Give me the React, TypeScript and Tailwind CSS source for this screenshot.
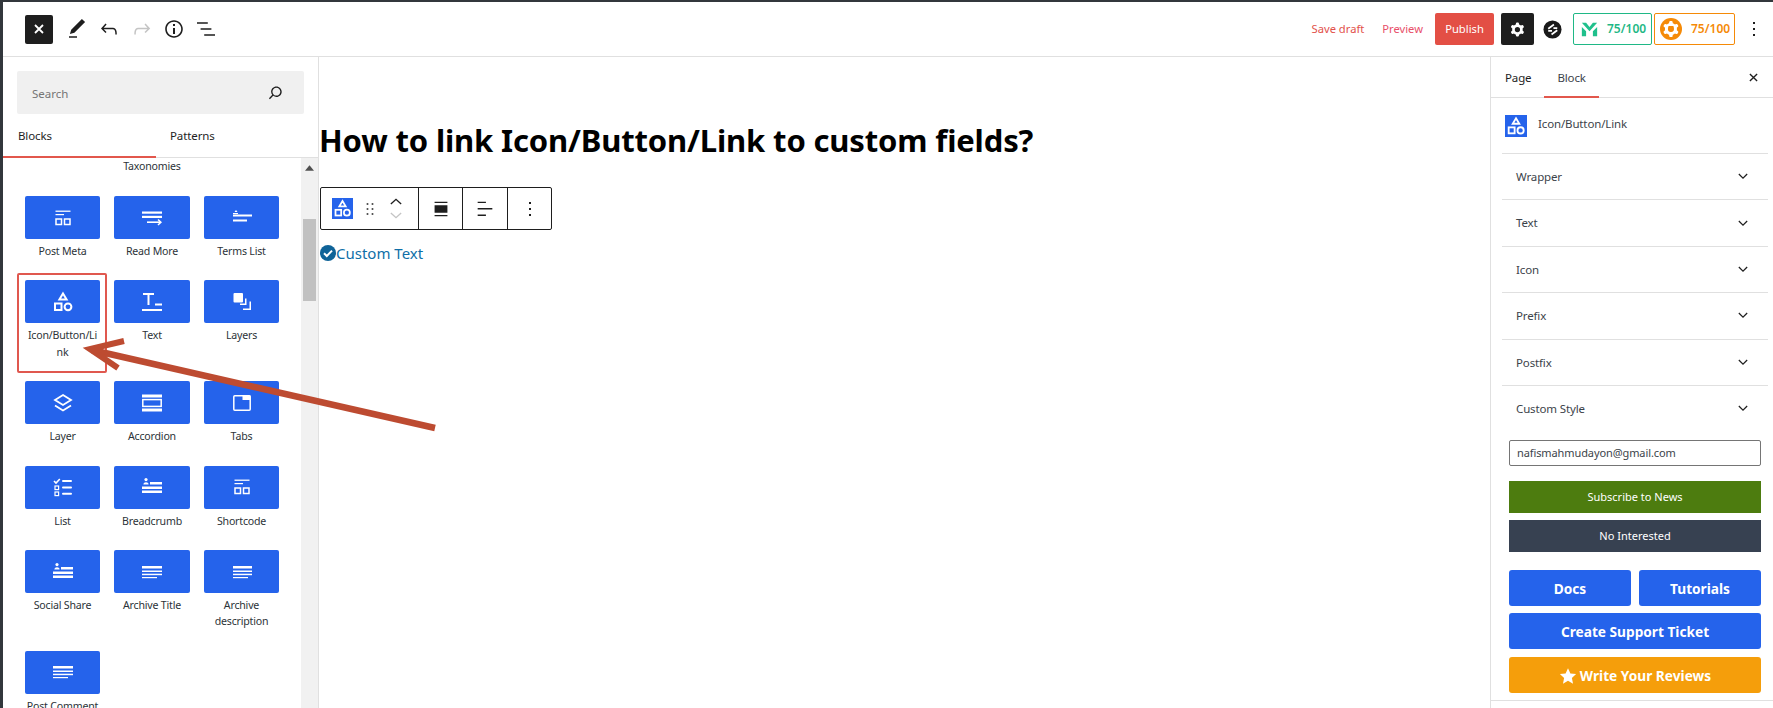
import React from "react";

const P = ({ d, className = "w-6 h-6", rule }: { d: string; className?: string; rule?: boolean }) => (
  <svg viewBox="0 0 24 24" className={className} fill="currentColor">
    <path d={d} fillRule={rule ? "evenodd" : undefined} clipRule={rule ? "evenodd" : undefined} />
  </svg>
);

const COG = "M10.289 4.836A1 1 0 0111.275 4h1.306a1 1 0 01.987.836l.244 1.466c.787.26 1.503.679 2.108 1.218l1.393-.522a1 1 0 011.216.437l.653 1.13a1 1 0 01-.23 1.273l-1.148.944a6.025 6.025 0 010 2.435l1.149.946a1 1 0 01.23 1.272l-.653 1.13a1 1 0 01-1.216.437l-1.394-.522c-.605.54-1.32.958-2.108 1.218l-.244 1.466a1 1 0 01-.987.836h-1.306a1 1 0 01-.986-.836l-.244-1.466a5.995 5.995 0 01-2.108-1.218l-1.394.522a1 1 0 01-1.217-.436l-.653-1.131a1 1 0 01.23-1.272l1.149-.946a6.026 6.026 0 010-2.435l-1.148-.944a1 1 0 01-.23-1.272l.653-1.131a1 1 0 011.217-.437l1.393.522a5.994 5.994 0 012.108-1.218l.244-1.466zM14.929 12a3 3 0 11-6 0 3 3 0 016 0z";
const DOTS = "M13 19h-2v-2h2v2zm0-6h-2v-2h2v2zm0-6h-2V5h2v2z";

const Shapes = ({ className = "w-6 h-6" }: { className?: string }) => (
  <svg viewBox="0 0 24 24" className={className} fill="none" stroke="currentColor" strokeWidth="2">
    <path d="M12 3.5l3.6 6H8.4z" />
    <rect x="4" y="13.5" width="6.5" height="6.5" />
    <circle cx="17" cy="16.8" r="3.4" />
  </svg>
);

const Cross = ({ className, sw = 1.8 }: { className: string; sw?: number }) => (
  <svg viewBox="0 0 10 10" className={className} fill="none" stroke="currentColor" strokeWidth={sw}>
    <path d="M1 1l8 8M9 1l-8 8" />
  </svg>
);

const W = ({ children }: { children: React.ReactNode }) => (
  <svg viewBox="0 0 24 24" className="w-6 h-6" fill="#fff" stroke="none">{children}</svg>
);

const lines = (narrow = false) => (
  <W>
    <rect x={narrow ? 3 : 2} y="6" width={narrow ? 19 : 20} height="2.5" />
    <rect x={narrow ? 3 : 2} y="10.5" width={narrow ? 19 : 20} height="1.5" />
    <rect x={narrow ? 3 : 2} y="13.7" width={narrow ? 19 : 20} height="1.5" />
    <rect x={narrow ? 3 : 2} y="17" width="15" height="1.2" />
  </W>
);

const meta = (
  <W>
    <rect x="4.5" y="4.5" width="15" height="1.5" opacity="0.85" />
    <rect x="4.5" y="8" width="8.5" height="1.2" />
    <rect x="5" y="13" width="5.5" height="5.5" fill="none" stroke="#fff" strokeWidth="1.5" />
    <rect x="13.5" y="13" width="5.5" height="5.5" fill="none" stroke="#fff" strokeWidth="1.5" />
  </W>
);

const person = (
  <W>
    <circle cx="6" cy="4.6" r="1.6" />
    <path d="M3.4 9.5c0-3 5.2-3 5.2 0z" />
    <rect x="10" y="7" width="12" height="2.5" />
    <rect x="2" y="11.5" width="20" height="2.5" />
    <rect x="2" y="15.5" width="20" height="2.5" />
  </W>
);

type Item = { label: string; icon: React.ReactNode; box?: boolean };

const items: Item[] = [
  { label: "Post Meta", icon: meta },
  {
    label: "Read More",
    icon: (
      <W>
        <rect x="2" y="5.5" width="20" height="2.2" />
        <rect x="2" y="9.8" width="20" height="2.2" />
        <rect x="7" y="15.4" width="13" height="1.6" />
        <path d="M18.5 13l3.5 3.2-3.5 3.2-1-1 2.3-2.2-2.3-2.2z" />
      </W>
    ),
  },
  {
    label: "Terms List",
    icon: (
      <W>
        <path d="M4.5 6h3l-1.5-2z" />
        <rect x="3" y="7" width="5" height="1" />
        <rect x="3" y="8.5" width="19" height="2" />
        <rect x="3" y="13.5" width="14" height="2" />
      </W>
    ),
  },
  { label: "Icon/Button/Li\nnk", icon: <Shapes className="w-6 h-6 text-white" />, box: true },
  {
    label: "Text",
    icon: (
      <W>
        <rect x="3" y="3" width="11" height="2" />
        <rect x="7.5" y="3" width="2" height="12" />
        <rect x="15" y="13.5" width="7" height="2" />
        <rect x="2" y="19" width="20" height="2" />
      </W>
    ),
  },
  {
    label: "Layers",
    icon: (
      <W>
        <rect x="3.5" y="3" width="9.5" height="9.5" rx="1" />
        <path d="M15 8.5h1.5v6.5H10v-1.5h5zM19.5 11.5H21V20h-8v-1.5h6.5z" />
      </W>
    ),
  },
  {
    label: "Layer",
    icon: (
      <W>
        <path d="M12 4l8 5-8 5-8-5z" fill="none" stroke="#fff" strokeWidth="1.8" />
        <path d="M4 14.5l8 5 8-5" fill="none" stroke="#fff" strokeWidth="1.8" />
      </W>
    ),
  },
  {
    label: "Accordion",
    icon: (
      <W>
        <rect x="2" y="3.5" width="20" height="3" />
        <rect x="2.8" y="8.6" width="18.4" height="6.8" fill="none" stroke="#fff" strokeWidth="1.5" />
        <rect x="2" y="17.5" width="20" height="3" />
      </W>
    ),
  },
  {
    label: "Tabs",
    icon: (
      <W>
        <rect x="3.8" y="4.8" width="16.4" height="14.4" rx="1" fill="none" stroke="#fff" strokeWidth="1.5" />
        <rect x="12.5" y="4.5" width="8" height="4.5" />
      </W>
    ),
  },
  {
    label: "List",
    icon: (
      <W>
        <path d="M3 6l2 2 3.8-4" fill="none" stroke="#fff" strokeWidth="1.6" />
        <rect x="4" y="11" width="3.6" height="3.6" fill="none" stroke="#fff" strokeWidth="1.2" />
        <rect x="4" y="17" width="3.6" height="3.6" fill="none" stroke="#fff" strokeWidth="1.2" />
        <rect x="11" y="5" width="10" height="2" rx="1" />
        <rect x="11" y="11.5" width="10" height="2" rx="1" />
        <rect x="11" y="17.8" width="10" height="2" rx="1" />
      </W>
    ),
  },
  { label: "Breadcrumb", icon: person },
  { label: "Shortcode", icon: meta },
  { label: "Social Share", icon: person },
  { label: "Archive Title", icon: lines() },
  { label: "Archive\ndescription", icon: lines(true) },
  { label: "Post Comment", icon: lines() },
];

const BlockItem = ({ item }: { item: Item }) => (
  <div className="relative pb-[21px] text-center text-[10.6px] tracking-[-0.2px] leading-[16.4px] text-[#2c3338] whitespace-pre-line">
    <div className="h-[43px] rounded-[2px] bg-[#2563eb] flex items-center justify-center">{item.icon}</div>
    <div className="mt-[4px] -mx-[6px]">{item.label}</div>
    {item.box && <div className="absolute -left-[8px] -top-[7px] w-[90px] h-[100px] border-2 border-[#e0584f] rounded-[2px]" />}
  </div>
);

const Sections = ["Wrapper", "Text", "Icon", "Prefix", "Postfix", "Custom Style"];

const Ibtn = ({ d, c = "text-[#1e1e1e]", ml }: { d: string; c?: string; ml: string }) => (
  <span className={`${c} ${ml} block`}>
    <P d={d} />
  </span>
);

export default function App() {
  return (
    <div className="relative w-[1773px] h-[708px] overflow-hidden bg-white border-t-2 border-l-[3px] border-[#32373c] font-['Noto_Sans',sans-serif] text-[#1e1e1e]">
      {/* header */}
      <header className="h-[54px] border-b border-[#e0e0e0] box-content flex items-center pl-[22px]">
        <div className="w-[28px] h-[29px] rounded-[2px] bg-[#1e1e1e] text-white flex items-center justify-center">
          <Cross className="w-[10px] h-[10px]" />
        </div>
        <Ibtn ml="ml-[12px]" d="M20.1 5.1L16.9 2 6.2 12.7l-1.3 4.4 4.5-1.3L20.1 5.1zM4 20.8h8v-1.5H4v1.5z" />
        <Ibtn ml="ml-[8px]" d="M18.3 11.7c-.6-.6-1.4-.9-2.3-.9H6.7l2.9-3.3-1.1-1-4.5 5L8.5 16l1-1-2.7-2.7H16c.5 0 .9.2 1.3.5 1 1 1 3.4 1 4.5v.3h1.5v-.2c0-1.5 0-4.3-1.5-5.7z" />
        <Ibtn ml="ml-[9px]" c="text-[#c4c4c4]" d="M15.6 6.5l-1.1 1 2.9 3.3H8c-.9 0-1.7.3-2.3.9-1.4 1.5-1.4 4.2-1.4 5.6v.2h1.5v-.3c0-1.1 0-3.5 1-4.5.3-.3.7-.5 1.3-.5h9.2L14.5 15l1.1 1.1 4.6-4.6-4.6-5z" />
        <Ibtn ml="ml-[8px]" d="M12 3.2c-4.8 0-8.8 3.9-8.8 8.8 0 4.8 3.9 8.8 8.8 8.8 4.8 0 8.8-3.9 8.8-8.8 0-4.8-4-8.8-8.8-8.8zm0 16c-4 0-7.2-3.3-7.2-7.2C4.8 8 8 4.8 12 4.8s7.2 3.3 7.2 7.2c0 4-3.2 7.2-7.2 7.2zM11 17h2v-6h-2v6zm0-8h2V7h-2v2z" />
        <Ibtn ml="ml-[8px]" d="M13.8 5.2H3v1.5h10.8V5.2zm-3.6 12v1.5H21v-1.5H10.2zm7.2-6H6.6v1.5h10.8v-1.5z" />

        <div className="ml-auto flex items-center h-full text-[11.2px]">
          <span className="text-[#e2504a]">Save draft</span>
          <span className="ml-[18px] text-[#e8506a]">Preview</span>
          <span className="ml-[12px] w-[59px] h-[32px] rounded-[2px] bg-[#e34f45] text-white flex items-center justify-center">Publish</span>
          <span className="ml-[7px] w-[33px] h-[32px] rounded-[2px] bg-[#1e1e1e] text-white flex items-center justify-center">
            <P d={COG} rule className="w-[21px] h-[21px]" />
          </span>
          <svg viewBox="0 0 20 20" className="ml-[9px] w-[19px] h-[19px]">
            <circle cx="10" cy="10" r="9.5" fill="#1a1a1a" />
            <path d="M5.5 9.2L11.5 4.8M5.5 11.5h4M9 15.2l6-4.4M11 8.5h4" stroke="#fff" strokeWidth="1.8" fill="none" />
          </svg>
          <span className="ml-[11px] w-[79px] h-[32px] rounded-[2px] border border-[#1fb886] text-[#1fb886] text-[12px] font-semibold flex items-center pl-[7px]">
            <svg viewBox="0 0 20 18" className="w-[17px] h-[17px] mr-[9px]" fill="#1fc08c">
              <path d="M1 1h5l4 5 4-5h5L10 11z" />
              <path d="M1 6l5 5v6H1zM19 6v11h-5v-6z" />
            </svg>
            75/100
          </span>
          <span className="ml-[2px] w-[81px] h-[32px] rounded-[2px] border border-[#f58a07] text-[#f58a07] text-[12px] font-semibold flex items-center pl-[5px]">
            <svg viewBox="0 0 22 22" className="w-[22px] h-[22px] mr-[9px]">
              <circle cx="11" cy="11" r="11" fill="#f58a07" />
              <path d={COG} fill="#fff" fillRule="evenodd" transform="translate(-1 -1)" />
              <path d="M8.5 8h5v3a2.5 2.5 0 01-5 0z" fill="#f58a07" />
            </svg>
            75/100
          </span>
          <span className="ml-[7px] mr-[7px] text-[#1e1e1e]">
            <P d={DOTS} />
          </span>
        </div>
      </header>

      <div className="flex h-[651px]">
        {/* left inserter */}
        <aside className="w-[316px] shrink-0 border-r border-[#e0e0e0] flex flex-col">
          <div className="px-[14px] pt-[14px]">
            <div className="h-[43px] rounded-[2px] bg-[#f0f0f0] flex items-center justify-between pl-[15px] pr-[18px] text-[11.5px] text-[#757575]">
              <span className="pt-[3px]">Search</span>
              <span className="text-[#1e1e1e]">
                <P d="M13 5c-3.3 0-6 2.7-6 6 0 1.4.5 2.7 1.3 3.7l-3.8 3.8 1.1 1.1 3.8-3.8c1 .8 2.3 1.3 3.7 1.3 3.3 0 6-2.7 6-6S16.3 5 13 5zm0 10.5c-2.5 0-4.5-2-4.5-4.5s2-4.5 4.5-4.5 4.5 2 4.5 4.5-2 4.5-4.5 4.5z" className="w-[21px] h-[21px]" />
              </span>
            </div>
          </div>
          <div className="h-[44px] flex border-b border-[#e0e0e0] text-[11.5px] tracking-[-0.1px] text-[#1e1e1e] relative">
            <div className="w-[153px] pl-[15px] pt-[13px] border-b-2 border-[#e2574c] h-[44px] relative">Blocks</div>
            <div className="pl-[14px] pt-[13px]">Patterns</div>
          </div>
          <div className="flex-1 flex min-h-0">
            <div className="flex-1 overflow-hidden pl-[22px]">
              <div className="grid grid-cols-[75px_76px_75px] gap-x-[14px]">
                <div className="col-start-2 h-[38px] text-center text-[10.6px] tracking-[-0.2px] leading-[16px] text-[#2c3338]">Taxonomies</div>
                <div />
                {items.map((it) => (
                  <BlockItem key={it.label} item={it} />
                ))}
              </div>
            </div>
            <div className="w-[17px] bg-[#f1f1f1] flex flex-col items-center">
              <svg viewBox="0 0 10 6" className="w-[9px] h-[6px] mt-[7px]" fill="#505050">
                <path d="M5 0l5 6H0z" />
              </svg>
              <div className="w-[13px] h-[82px] bg-[#c1c1c1] mt-[48px]" />
            </div>
          </div>
        </aside>

        {/* canvas */}
        <main className="flex-1 pt-[63px] pl-[1px]">
          <h1 className="-ml-[1px] text-[31px] tracking-[-0.15px] leading-[40px] font-bold text-black">How to link Icon/Button/Link to custom fields?</h1>
          <div className="mt-[27px] w-[232px] h-[43px] flex rounded-[2px] border border-[#1e1e1e]">
            <div className="w-[98px] flex items-center pl-[11px] border-r border-[#1e1e1e]">
              <span className="w-[21px] h-[21px] bg-[#2563eb] text-white flex items-center justify-center">
                <Shapes className="w-[21px] h-[21px]" />
              </span>
              <P d="M8 7h2V5H8v2zm0 6h2v-2H8v2zm0 6h2v-2H8v2zm6-14v2h2V5h-2zm0 8h2v-2h-2v2zm0 6h2v-2h-2v2z" className="ml-[7px] w-[20px] h-[20px]" />
              <span className="ml-[10px] flex flex-col">
                <svg viewBox="0 0 14 8" className="w-[12px] h-[7px]" fill="none" stroke="#1e1e1e" strokeWidth="1.6"><path d="M1 7l6-5.5L13 7" /></svg>
                <svg viewBox="0 0 14 8" className="mt-[7px] w-[12px] h-[7px]" fill="none" stroke="#c4c4c4" strokeWidth="1.6"><path d="M1 1l6 5.5L13 1" /></svg>
              </span>
            </div>
            <div className="w-[44px] flex items-center justify-center border-r border-[#1e1e1e]">
              <P d="M5 4h14v1.5H5V4zm0 14.5h14V20H5v-1.5zM5 8h14v8H5z" className="w-[22px] h-[22px]" />
            </div>
            <div className="w-[45px] flex items-center justify-center border-r border-[#1e1e1e]">
              <P d="M13 5.5H4V4h9v1.5Zm7 7H4V11h16v1.5Zm-7 7H4V18h9v1.5Z" className="w-[22px] h-[22px]" />
            </div>
            <div className="flex-1 flex items-center justify-center">
              <P d={DOTS} />
            </div>
          </div>
          <div className="mt-[12px] flex items-center text-[15px] leading-[22px] text-[#0f6fa8]">
            <svg viewBox="0 0 16 16" className="w-[16px] h-[16px]">
              <circle cx="8" cy="8" r="8" fill="#0f6398" />
              <path d="M4 8.2l2.8 2.8L12 5.6" fill="none" stroke="#fff" strokeWidth="2" />
            </svg>
            <span>Custom Text</span>
          </div>
        </main>

        {/* right settings */}
        <aside className="w-[283px] shrink-0 border-l border-[#e0e0e0] flex flex-col text-[11.5px] tracking-[-0.14px] text-[#3c434a]">
          <div className="h-[41px] border-b border-[#e0e0e0] flex relative">
            <span className="ml-[14px] pt-[12px] text-[#1e1e1e]">Page</span>
            <span className="ml-[13px] px-[13px] pt-[12px] h-[41px] border-b-2 border-[#e2574c]">Block</span>
            <span className="ml-auto mr-[15px] mt-[16px] text-[#1e1e1e]">
              <Cross className="w-[9px] h-[9px]" sw={1.5} />
            </span>
          </div>
          <div className="h-[55px] flex items-start pl-[14px] pt-[17px]">
            <span className="w-[22px] h-[22px] bg-[#2563eb] text-white">
              <Shapes className="w-[22px] h-[22px]" />
            </span>
            <span className="ml-[11px]">Icon/Button/Link</span>
          </div>
          <div className="ml-[11px] w-[266px]">
            {Sections.map((s) => (
              <div key={s} className="h-[46.4px] border-t border-[#e0e0e0] flex items-center justify-between pl-[14px] pr-[20px] box-border">
                <span>{s}</span>
                <svg viewBox="0 0 12 8" className="w-[10px] h-[7px]" fill="none" stroke="#1e1e1e" strokeWidth="1.5">
                  <path d="M1 1l5 5 5-5" />
                </svg>
              </div>
            ))}
          </div>
          <div className="pl-[18px] w-[270px] flex flex-col tracking-normal">
            <div className="mt-[9px] h-[26px] rounded-[2px] border border-[#757575] pl-[7px] flex items-center text-[11px] tracking-[-0.1px]">nafismahmudayon@gmail.com</div>
            <div className="mt-[15px] h-[32px] bg-[#4d7c0f] text-white flex items-center justify-center text-[11px]">Subscribe to News</div>
            <div className="mt-[7px] h-[32px] bg-[#374151] text-white flex items-center justify-center text-[11px]">No Interested</div>
            <div className="mt-[18px] flex gap-[8px] text-[13.7px] font-bold text-white">
              <div className="flex-1 h-[36px] pt-[1px] rounded-[3px] bg-[#2563eb] flex items-center justify-center">Docs</div>
              <div className="flex-1 h-[36px] pt-[1px] rounded-[3px] bg-[#2563eb] flex items-center justify-center">Tutorials</div>
            </div>
            <div className="mt-[7px] h-[36px] pt-[1px] rounded-[3px] bg-[#2563eb] flex items-center justify-center text-[13.7px] font-bold text-white">Create Support Ticket</div>
            <div className="mt-[8px] h-[36px] pt-[1px] rounded-[3px] bg-[#f59e0b] flex items-center justify-center text-[13.7px] font-bold text-white">
              <svg viewBox="0 0 24 24" className="w-[18px] h-[18px] mr-[3px]" fill="#fff">
                <path d="M12 1.5l3.2 7 7.6.9-5.6 5.2 1.5 7.6L12 18.4l-6.7 3.8 1.5-7.6L1.2 9.4l7.6-.9z" />
              </svg>
              Write Your Reviews
            </div>
          </div>
          <div className="mt-[7px] border-t border-[#e0e0e0]" />
        </aside>
      </div>

      {/* annotation arrow */}
      <svg className="absolute -left-[3px] -top-[2px] pointer-events-none" width="460" height="440" viewBox="0 0 460 440" fill="none" stroke="#bd4b31">
        <path d="M435 428L92 350" strokeWidth="6.5" />
        <path d="M124 341L90 349L118 368" strokeWidth="6" />
      </svg>
      <svg className="absolute -left-[3px] top-[174px]" width="3" height="31" viewBox="0 0 3 31">
        <rect width="3" height="31" fill="#e8564a" />
        <path d="M3 7L0 15.5L3 24z" fill="#fff" />
      </svg>
    </div>
  );
}
